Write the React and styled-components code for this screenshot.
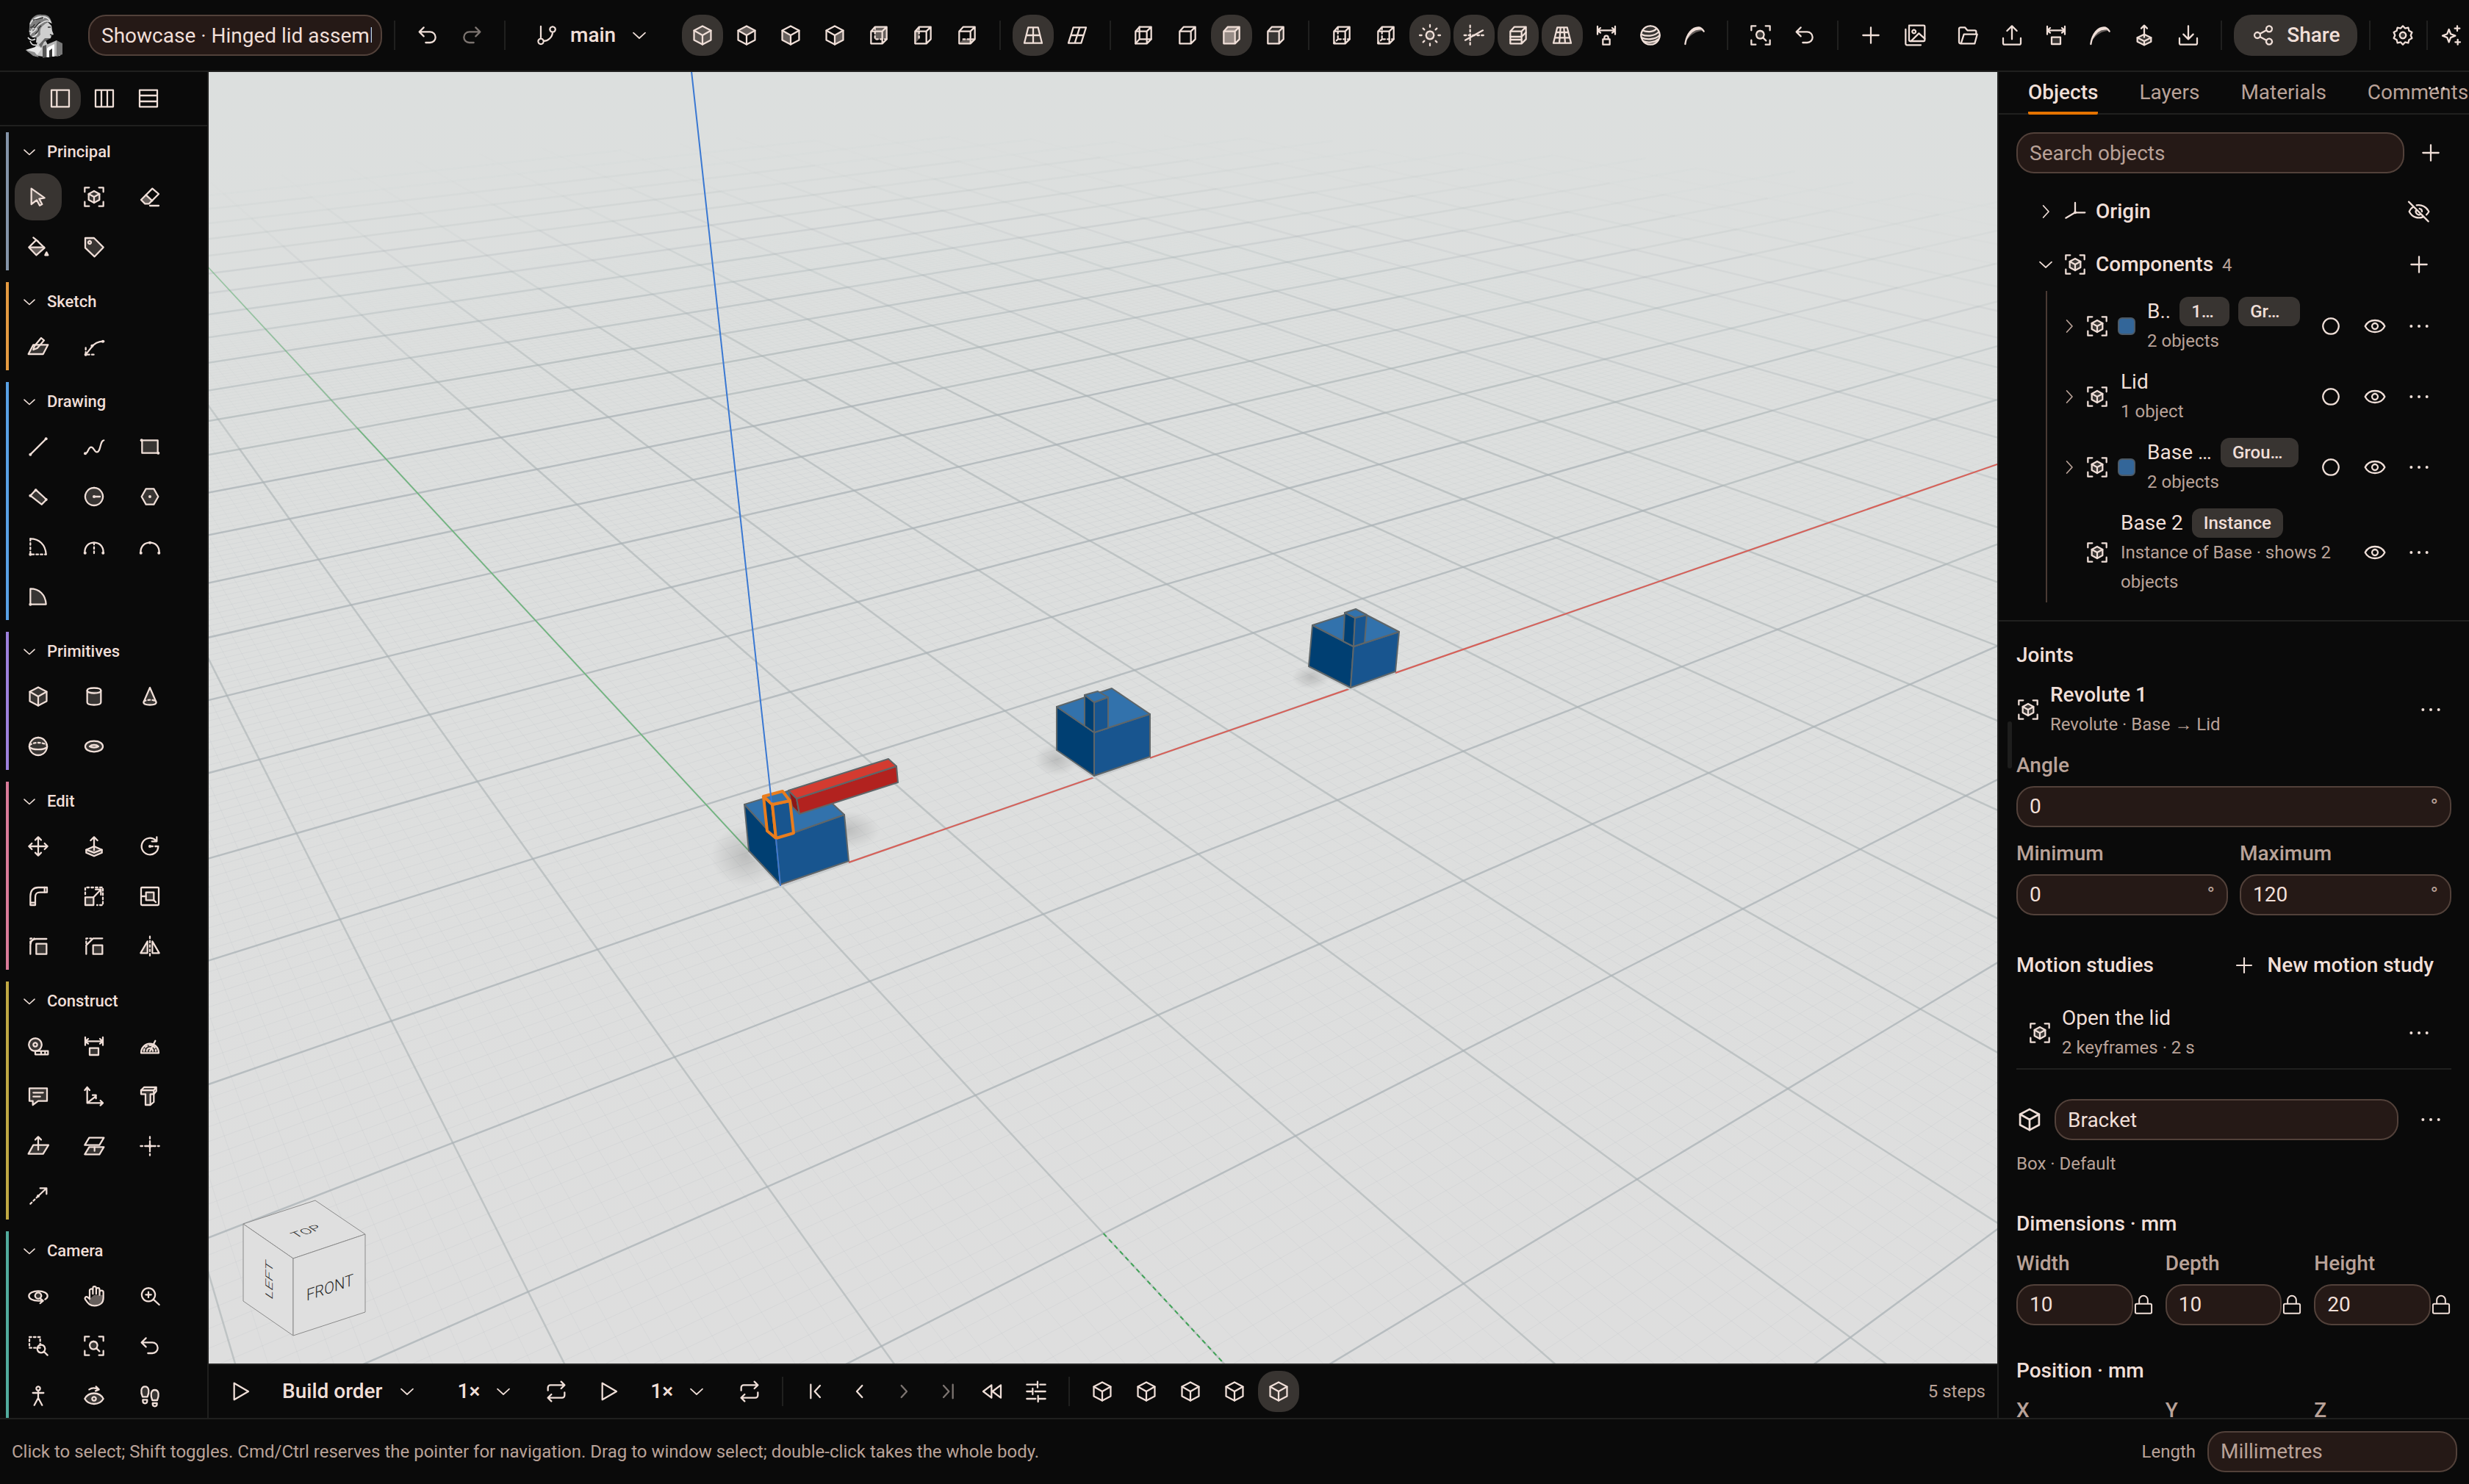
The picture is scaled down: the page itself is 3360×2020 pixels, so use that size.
import React from 'react';
import styled, { createGlobalStyle, css } from 'styled-components';

const colors = {
  bg: '#0a0a0a',
  line: '#20201f',
  text: '#f0dfd8',
  muted: '#b9a298',
  field: '#251916',
  fieldLine: '#52413a',
  active: '#383431',
  accent: '#e57300',
};

const GlobalStyle = createGlobalStyle`
  * { box-sizing: border-box; }
  body {
    margin: 0;
    background: ${colors.bg};
    color: ${colors.text};
    font-family: Roboto, "Liberation Sans", sans-serif;
    font-size: 28px;
    line-height: 40px;
  }
  button, input, select { font: inherit; color: inherit; }
`;

/* ---------- icons ---------- */

// s: stroke, t: stroke with tint, h: tint only, d: dashed stroke, o: dot
const CUBE = 'M12 2.6 20.6 7.2v9.6L12 21.4 3.4 16.8V7.2z';
const CUBE_IN = 'M3.4 7.2 12 12l8.6-4.8M12 12v9.4';
const BOX_OUT = 'M4 8h11.5v12.5H4zM4 8l4-4.5h12V16l-4.500 4.500M15.500 8 20 3.500';
const CORNERS = 'M2.500 7V2.500H7M17 2.500h4.500V7M21.500 17v4.500H17M7 21.500H2.500V17';
const DIMENSION = 'M3 3v8M21 3v8M3 7h18M6 4.500 3 7l3 2.500M18 4.500 21 7l-3 2.500';

const icons = {
  undo: [['s', 'M8 4 3.500 8.500 8 13M3.500 8.500h11a5.500 5.500 0 0 1 0 11H10']],
  redo: [['s', 'm16 4 4.500 4.500L16 13M20.500 8.500h-11a5.500 5.500 0 0 0 0 11H14']],
  branch: [['s', 'M6 3v12M6 15.500a2.800 2.800 0 1 0 .1 0M18 3.200a2.800 2.800 0 1 0 .1 0M18 8.800C18 14 13 18 8.800 18']],
  down: [['s', 'm6 9.500 6 5.500 6-5.500']],
  right: [['s', 'm9.500 6 5.500 6-5.500 6']],
  left: [['s', 'm14.500 6-5.500 6 5.500 6']],
  cube: [['s', CUBE], ['s', CUBE_IN]],
  cubeTint: [['t', CUBE], ['s', CUBE_IN]],
  cubeTop: [['s', CUBE], ['s', CUBE_IN], ['h', 'M12 2.600 20.600 7.200 12 12 3.400 7.200z']],
  cubeLeft: [['s', CUBE], ['s', CUBE_IN], ['h', 'M3.400 7.200 12 12v9.400l-8.600-4.600z']],
  cubeRight: [['s', CUBE], ['s', CUBE_IN], ['h', 'M20.600 7.200 12 12v9.400l8.600-4.600z']],
  boxBack: [['s', BOX_OUT], ['h', 'M8 3.500h12V16H8z'], ['d', 'M8 4v12h12']],
  boxSide: [['s', BOX_OUT], ['h', 'M4 8l4-4.500V16l-4 4.500z'], ['d', 'M8 4v12']],
  boxBottom: [['s', BOX_OUT], ['h', 'm4 20.500 4-4.500h12l-4.500 4.500z'], ['d', 'M8 16h12']],
  perspective: [['s', 'M7 4h10l4 16H3zM5 12h14M12 4v16']],
  ortho: [['s', 'M8 4h13l-5 16H3zM5.500 12h13M14.500 4l-5 16']],
  wire: [['s', BOX_OUT], ['s', 'M8 3.500V16h12M8 16l-4 4.500']],
  boxHidden: [['s', BOX_OUT]],
  boxShaded: [['t', BOX_OUT], ['h', 'M4 8h11.500v12.500H4z'], ['h', 'M4 8l4-4.500h12L15.500 8z']],
  boxMono: [['t', BOX_OUT]],
  boxDash: [['s', BOX_OUT], ['d', 'M8 4v12h12M8 16l-4 4']],
  sun: [['t', 'M12 8a4 4 0 1 0 .01 0'], ['s', 'M12 1.500v2M12 20.500v2M1.500 12h2M20.500 12h2M5 5l1.300 1.300M17.700 17.700 19 19M5 19l1.300-1.300M17.700 6.300 19 5']],
  axes: [['d', 'M8 2v20M2 12h20'], ['s', 'M3 17 21 7']],
  section: [['s', BOX_OUT], ['s', 'M4 13.500h11.500l4.500-4.500M4 16.500h11.500']],
  gridPlane: [['s', 'M7 4h10l4 16H3zM5.800 9h12.400M4.500 14.500h15M10.300 4 9 20M13.700 4 15 20']],
  dimLock: [['s', DIMENSION], ['s', 'M8.500 16h7v5.500h-7zM10 16v-1.500a2 2 0 0 1 4 0V16']],
  dimBox: [['s', DIMENSION], ['t', 'M7.500 14h9v7h-9z']],
  zebra: [['t', 'M12 2.500a9.500 9.500 0 1 0 .01 0'], ['s', 'M4 7c4 2 11 2 14-1.500M2.800 11c5 2.500 13 2 17.200-2M3 14.500c5 2.500 13.500 2 18-2M5 18c4 2 11 1.500 15-2']],
  comb: [['h', 'M2.500 20.500C4 10 10 4 17 4l4.500 3.500C15 7 8 11 4 17.500z'], ['s', 'M2.500 21C4 10 10 4 16 4c2.500 0 4 1.500 5.500 4M3.500 16C7 9 12 5 18 5.500']],
  zoomFit: [['s', CORNERS], ['t', 'M11.500 7.500a4 4 0 1 0 .01 0'], ['s', 'm14.500 14.500 3 3']],
  plus: [['s', 'M12 4v16M4 12h16']],
  images: [['s', 'M6 2h15a1 1 0 0 1 1 1v14a1 1 0 0 1-1 1H7a1 1 0 0 1-1-1V3M2.500 6v14.500a1.500 1.500 0 0 0 1.500 1.500h14'], ['s', 'M11 6.500a1.800 1.800 0 1 0 .01 0M8 18l8-8 6 5.500']],
  folder: [['s', 'M3 19V5.500a1.500 1.500 0 0 1 1.500-1.500H9l2.500 3H19a1.500 1.500 0 0 1 1.500 1.500V11M4.500 20.500h14.500l2.500-9.500H8L5 20.500a2 2 0 0 1-2-2']],
  upload: [['s', 'M12 16V2.500M7 7.500l5-5 5 5M3 15v5a1.500 1.500 0 0 0 1.500 1.500h15A1.500 1.500 0 0 0 21 20v-5']],
  download: [['s', 'M12 2.500V16M7 11l5 5 5-5M3 15v5a1.500 1.500 0 0 0 1.500 1.500h15A1.500 1.500 0 0 0 21 20v-5']],
  cubeUp: [['t', 'm12 11 7 3.500v4L12 22l-7-3.500v-4z'], ['s', 'm5 14.500 7 3.500 7-3.500M12 18v4M12 14V2M9 5l3-3 3 3']],
  share: [['s', 'M18 2.500a3 3 0 1 0 .01 0M6 9a3 3 0 1 0 .01 0M18 15.500a3 3 0 1 0 .01 0M8.600 10.500l6.800-3.700M8.600 13.500l6.800 3.700']],
  gear: [['s', 'M12 2.500 14.200 4.900 17.500 4.200 18.300 7.400 21.300 9 20 12l1.300 3-3 1.600-.8 3.200-3.300-.7L12 21.500l-2.200-2.400-3.300.7-.8-3.200-3-1.600L4 12 2.700 9l3-1.600.8-3.200 3.300.7z'], ['t', 'M12 8.800a3.200 3.200 0 1 0 .01 0']],
  sparkle: [['s', 'm9.500 6 1.800 4.700L16 12.500l-4.700 1.800L9.500 19l-1.800-4.700L3 12.500l4.700-1.800zM18 2.500v5M15.500 5h5M18.500 16.500v5M16 19h5']],
  colsLeft: [['s', 'M3 3.500h18v17H3zM8.500 3.500v17']],
  cols: [['s', 'M3 3.500h18v17H3zM9 3.500v17M15 3.500v17']],
  rows: [['s', 'M3 3.500h18v17H3zM3 9h18M3 15h18']],
  pointer: [['t', 'M5 3.500 18.500 13l-5.500 1 3 5.500-2.500 1.300-3-5.500L5 19.500z']],
  scanCube: [['s', CORNERS], ['t', 'm12 6 5.500 3v6L12 18l-5.500-3V9z'], ['s', 'm6.500 9 5.500 3 5.500-3M12 12v6']],
  eraser: [['s', 'm3 15 11.500-11.500 6.500 5.500-10 10H7z'], ['h', 'm3 15 5-5 6.500 6-3.500 3H7z'], ['s', 'm8 10 6.500 6M12 21h9']],
  bucket: [['s', 'm10 5 8.500 8L10 20.500 2.500 12.500zM7 2.500l5 4'], ['h', 'M2.500 12.500h16l-8.500 8z'], ['s', 'M3 12.500h15M20.500 17.500l1.500 3h-3z']],
  tag: [['t', 'M3 3h9l9.500 9.500L12.500 22 3 13z'], ['s', 'M7.500 6a1.500 1.500 0 1 0 .01 0']],
  sketch: [['t', 'M7 10h15l-5 9.500H2z'], ['s', 'm7 15 1-3.500L15 3l3 2.500-7 8z']],
  sketchArc: [['s', 'M3.500 20 9 13c3-4.500 7-6.500 13-6.500'], ['d', 'M3.500 13v7H13'], ['o', 3.500, 20], ['o', 10, 11], ['o', 21, 6.500]],
  line: [['s', 'M4 20 20 4'], ['o', 4, 20], ['o', 20, 4]],
  spline: [['s', 'M3 19c3 0 3-6.500 6-6.500s3 5 6 5c4 0 3-12 7-12'], ['o', 3, 19]],
  rect: [['t', 'M4 5.500h16v13H4z'], ['o', 3.500, 5.500], ['o', 20.500, 18.500]],
  rectRot: [['t', 'M4 11 9.500 5l11 10-5 5z'], ['o', 4, 11], ['o', 9.500, 5.500], ['o', 20, 15]],
  circle: [['t', 'M12 3a9 9 0 1 0 .01 0'], ['s', 'M12 12h6'], ['o', 12, 12]],
  polygon: [['t', 'M8 4h8l4.500 8-4.500 8H8l-4.500-8z'], ['o', 12, 12]],
  arcCenter: [['s', 'M4 4c9 0 15.500 6 16 16'], ['d', 'M4 4v16h16'], ['o', 4, 20]],
  arc3: [['s', 'M2.500 18c0-6.500 4-10 9.500-10s9.500 3.500 9.500 10'], ['d', 'M12 8v11'], ['o', 2.800, 18.500], ['o', 21.200, 18.500]],
  arcTan: [['s', 'M2.500 18c0-6.500 4-10 9.500-10s9.500 3.500 9.500 10'], ['o', 12, 8], ['o', 2.800, 18.500], ['o', 21.200, 18.500]],
  pie: [['t', 'M4 4c9 0 15.500 6 16 16H4z'], ['o', 4, 20]],
  cylinder: [['t', 'M5 6v12c0 3.500 14 3.500 14 0V6'], ['s', 'M5 6c0-3.500 14-3.500 14 0S5 9.500 5 6']],
  cone: [['t', 'M12 3 5.500 18c0 3.500 13 3.500 13 0z'], ['d', 'M6 17c3-2 9-2 12 0']],
  sphere: [['t', 'M12 3a9 9 0 1 0 .01 0'], ['s', 'M3 12.500c3 3.500 15 3.500 18 0'], ['d', 'M3.500 10.500c4-3 13-3 17 0']],
  torus: [['t', 'M12 6.500c12 0 12 11 0 11s-12-11 0-11'], ['s', 'M7.500 12c2-2 7-2 9 0-2 1.500-7 1.500-9 0']],
  move: [['s', 'M12 2.500v19M2.500 12h19M9 5.500l3-3 3 3M9 18.500l3 3 3-3M5.500 9l-3 3 3 3M18.500 9l3 3-3 3']],
  pushPull: [['t', 'm12 12 8 3.500v3L12 22l-8-3.500v-3z'], ['s', 'm4 15.500 8 3 8-3M12 16V2.500M8.500 6 12 2.500 15.500 6']],
  rotate: [['s', 'M20.500 12A8.500 8.500 0 1 1 18 6M19 2.500V7h-5'], ['d', 'M13 12h8'], ['o', 12, 12]],
  pipe: [['s', 'M4 21v-9c0-6 3-9 8-9h9v5h-7c-3.500 0-5 1-5 5v8z'], ['s', 'M4.500 18.500h4M18.500 3v5']],
  scale: [['t', 'M3 13h8.500v8H3z'], ['d', 'M3 10V3h18v18h-6'], ['s', 'M11.500 13 19 5M13.500 5H19v5.500']],
  offset: [['s', 'M4 3h16a1 1 0 0 1 1 1v16a1 1 0 0 1-1 1H4a1 1 0 0 1-1-1V4a1 1 0 0 1 1-1M3 12h5M16 16l2 2'], ['t', 'M8 8h8v8H8z']],
  fillet: [['t', 'M10 9.500h10.500V20H10z'], ['s', 'M4 20v-9c0-4 2-6.500 6-6.500h10.500'], ['d', 'M4 9V4h4']],
  chamfer: [['t', 'M11 11h9.500v9H11z'], ['s', 'M4 20v-9l7-7h9.500'], ['d', 'M4 9V4h5']],
  mirror: [['t', 'M9.500 7v12h-7z'], ['s', 'M14.500 7v12h7z'], ['d', 'M12 2v20']],
  tape: [['t', 'M9 4a6.500 6.500 0 1 0 .01 0'], ['s', 'M9 8.500a2 2 0 1 0 .01 0M9 17h13v3.500H9zM15 17v3M19 17v3']],
  protractor: [['t', 'M3 19a9 9.500 0 0 1 18 0z'], ['s', 'M12 17 17.500 6.500M9 17a3 3 0 0 1 6 0'], ['d', 'M6 17a6 6 0 0 1 12 0']],
  note: [['t', 'M3 4h18v13h-9l-5.500 4v-4H3z'], ['s', 'M7 8.500h10M7 12.500h7']],
  ucs: [['s', 'M5 3v16h16M2.500 6 5 3l2.500 3M18.500 16.500 21 19l-2.500 2.500M5 19l9-7M10.500 11H14v3.500']],
  text3d: [['t', 'M3 6h13v4h-3.500v11H7.500V10H3z'], ['s', 'M3 6 6 3h12.500L16 6M18.500 3v4L16 10M12.500 21l3.500-3v-8']],
  planeUp: [['t', 'M7 11h15.500l-5.500 9H2z'], ['s', 'M12 16V2.500M9 5.500l3-3 3 3']],
  planes: [['s', 'M7 3.500h15L17.500 11H2.500z'], ['t', 'M7 13h15l-4.500 7.500h-15z'], ['s', 'M12.500 13v4']],
  cross: [['s', 'M12 9v6M9 12h6'], ['d', 'M12 2.500v19M2.500 12h19'], ['o', 12, 12]],
  axisLine: [['d', 'M4 20 12 12'], ['s', 'M12 12 20 4.500M14 4h6.500v6'], ['o', 12, 12]],
  orbit: [['s', 'M19 15.500c2-1 2.500-2.500 2.500-3.500 0-3-4-5-9.500-5S2.500 9 2.500 12s4 5 9.500 5h4M14 14.500l3 2.500-3 2.500'], ['t', 'M12 8.500a3.200 3.200 0 1 0 .01 0']],
  hand: [['h', 'M6.500 16 12 11h9v5c0 4-4 6-8 6s-6-2.500-6.500-6z'], ['s', 'M7.500 12V6a1.700 1.700 0 0 1 3.300 0V4a1.700 1.700 0 0 1 3.400 0v1.500a1.700 1.700 0 0 1 3.400 0v3a1.700 1.700 0 0 1 3.900 0V14c0 5-3.500 8-9 8-4.500 0-6.500-2-9.500-6.500-1-1.500.5-3 2-2.500L7.500 15V6M10.800 5v5M14.200 5v5M17.600 7v4']],
  zoomIn: [['s', 'M10.500 4a6.800 6.800 0 1 0 .01 0M15.500 15.500 21.500 21M10.500 8v5.500M7.800 10.700h5.500']],
  zoomWin: [['d', 'M3 3h11v11H3z'], ['s', 'M15 11a4 4 0 1 0 .01 0M18 18l3.500 3.500']],
  person: [['s', 'M12 2.500a2 2 0 1 0 .01 0M12 7v7M6.500 9h11M12 14l-4 7.500M12 14l4 7.500']],
  lookAround: [['t', 'M2.500 15c4-7.500 15-7.500 19 0-4 7-15 7-19 0z'], ['s', 'M12 13a2 2 0 1 0 .01 0M7 5.500c3-2 6-2 9.500 0M14 2.500l3 3-3.500 1.500']],
  steps: [['t', 'M7 2.500c4.500 0 4.500 6 2.500 10.500h-5C2.500 8.500 2.500 2.500 7 2.500zM17 6c4.500 0 4.500 6 2.500 10.500h-5C12.500 12 12.500 6 17 6z'], ['s', 'M4.800 16h4.400v1.500a2 2 0 0 1-4.400 0zM14.800 19.500h4.400v1a2 2 0 0 1-4.400 0z']],
  origin: [['s', 'M12 3v10h10M12 13 2.500 18.500'], ['o', 12, 13]],
  eye: [['s', 'M2 12c4-8 16-8 20 0-4 8-16 8-20 0zM12 9a3 3 0 1 0 .01 0']],
  eyeOff: [['s', 'M6.500 7C4.500 8 3 10 2 12c3 6 9 7.500 14 5.500M9.500 5.500c5-1 10 1.500 12.500 6.500-.7 1.300-1.500 2.500-2.500 3.300M9.500 10a3.200 3.200 0 0 0 4.500 4.500M1.500 2l20 20M12.500 9a3 3 0 0 1 2.500 3']],
  ring: [['s', 'M12 4a8 8 0 1 0 .01 0']],
  dots: [['o', 4, 12], ['o', 12, 12], ['o', 20, 12]],
  lock: [['s', 'M4 11h16a1.500 1.500 0 0 1 1.500 1.500v8A1.500 1.500 0 0 1 20 22H4a1.500 1.500 0 0 1-1.500-1.500v-8A1.500 1.500 0 0 1 4 11zM7 11V6.500a5 5 0 0 1 10 0V11']],
  play: [['s', 'M5 3.500v17L19.500 12z']],
  repeat: [['s', 'm17 2 3.500 3.500L17 9M3.500 11V8A2.500 2.500 0 0 1 6 5.500h14M7 22l-3.500-3.500L7 15M20.500 13v3a2.500 2.500 0 0 1-2.500 2.500H4']],
  first: [['s', 'M7 5v14M16.500 6 11 12l5.500 6']],
  last: [['s', 'M17 5v14M7.500 6 13 12l-5.500 6']],
  rewind: [['s', 'M11.500 5.500 3 12l8.500 6.500zM21 5.500 12.500 12l8.500 6.500z']],
  sliders: [['s', 'M2.500 5H12M16 5h5.500M13.500 2v6M2.500 12H7M11 12h10.500M8.500 9v6M2.500 19.500h9M15 19.500h6.500M14 16.500v6']],
};

function Icon({ name, size = 32, weight = 1.7 }) {
  return (
    <svg
      width={size}
      height={size}
      viewBox="0 0 24 24"
      fill="none"
      stroke="currentColor"
      strokeWidth={weight}
      strokeLinecap="round"
      strokeLinejoin="round"
      aria-hidden="true"
    >
      {icons[name].map(([kind, a, b], i) => {
        if (kind === 'o') return <circle key={i} cx={a} cy={b} r="1.500" fill="currentColor" stroke="none" />;
        if (kind === 'h') return <path key={i} d={a} fill="currentColor" fillOpacity=".4" stroke="none" />;
        if (kind === 't') return <path key={i} d={a} fill="currentColor" fillOpacity=".2" />;
        if (kind === 'd') return <path key={i} d={a} strokeDasharray="2 2.400" />;
        return <path key={i} d={a} />;
      })}
    </svg>
  );
}

/* ---------- shared parts ---------- */

const Button = styled.button`
  display: flex;
  align-items: center;
  justify-content: center;
  gap: ${(props) => props.$gap || 16}px;
  flex: none;
  height: ${(props) => (props.$tool ? '64px' : '56px')};
  min-width: ${(props) => (props.$tool ? '64px' : '56px')};
  padding: ${(props) => (props.$wide ? '0 24px' : '0')};
  border: 0;
  border-radius: 24px;
  background: ${(props) => (props.$active ? colors.active : 'transparent')};
  opacity: ${(props) => (props.$dim ? 0.5 : 1)};
  font-weight: 500;
  white-space: nowrap;
  svg { flex: none; }
`;

const fieldStyle = css`
  height: 56px;
  min-width: 0;
  border: 2px solid ${colors.fieldLine};
  border-radius: 24px;
  background: ${colors.field};
  outline: none;
`;

const TextInput = styled.input`
  ${fieldStyle}
  flex: 1;
  padding: 0 16px;
  &::placeholder { color: ${colors.muted}; opacity: 1; }
`;

const Group = styled.div`
  display: flex;
  align-items: center;
  gap: 4px;
  flex: none;
`;

const Divider = styled.span`
  flex: none;
  width: 2px;
  height: 40px;
  background: ${colors.line};
`;

function IconButton({ icon, label, ...rest }) {
  return (
    <Button type="button" aria-label={label || icon} {...rest}>
      <Icon name={icon} />
    </Button>
  );
}

/* ---------- header ---------- */

const Header = styled.header`
  display: flex;
  align-items: center;
  gap: 16px;
  height: 98px;
  padding-left: 32px;
  border-bottom: 2px solid ${colors.line};
  overflow: hidden;
`;

const Logo = styled.a`
  display: block;
  flex: none;
  width: 56px;
  height: 64px;
  margin-right: 16px;
  svg { display: block; }
`;

const Title = styled(TextInput)`
  flex: none;
  width: 400px;
  padding-right: 12px;
`;

const Branch = styled(Button)`
  margin-right: 2px;
`;

const headerGroups = [
  ['cubeTint*', 'cubeTop', 'cubeLeft', 'cubeRight', 'boxBack', 'boxSide', 'boxBottom'],
  ['perspective*', 'ortho'],
  ['wire', 'boxHidden', 'boxShaded*', 'boxMono'],
  ['boxDash', 'boxDash', 'sun*', 'axes*', 'section*', 'gridPlane*', 'dimLock', 'zebra', 'comb'],
  ['zoomFit', 'undo'],
];

function Bust() {
  return (
    <svg width="56" height="64" viewBox="0 0 56 64">
      <path d="M5 54 14 51 20 40l10-1 4 8-2 15-12-2z" fill="#c4c4c4" />
      <path d="m3 52 14 9 8-11-6-3z" fill="#e6e6e6" />
      <path d="m3 52 12 3 6 7-8-2z" fill="#8c8c8c" />
      <path d="M19 22 33 14l5 5 1 7 2 5-3 1-1 4-7 1-3 6-10-1z" fill="#cfcfcf" />
      <path d="M29 36 37 36l-9 5-4 8-3-4z" fill="#666" />
      <path d="M8 21C7 10 16 2 25 4c9-1 13 5 13 12-4-3-8-2-10 2-4 2-6 6-5 13-3 4-5 5-9 4-6 0-7-6-6-14z" fill="#7f7f7f" />
      <path d="M9 17c3-8 11-11 16-10 7-1 10 3 12 7-7-4-11 1-15 3s-6 7-10 6M8 26c4 4 7 1 10-4M12 34c5 0 8-4 7-10M9 31c2-1 3-4 2-7M6 35c2 3 6 5 10 2M9 40c2 5 5 6 8 5M15 12c3-3 8-5 13-3" fill="none" stroke="#e4e4e4" strokeWidth="1.600" />
      <path d="M13 11c5 1 8-3 14-3M14 22c4 0 4-6 9-8M16 30c5-2 3-8 8-11M9 21c3 1 5-2 6-4" fill="none" stroke="#2a2a2a" strokeWidth="1.300" />
      <path d="M33 21h4M36 31l3 1" stroke="#333" strokeWidth="1.500" />
      <path d="m26 47 19-8 5 5v16l-24 2z" fill="#b5b5b5" />
      <path d="m26 47 5-2v17l-5 1z" fill="#555" />
      <path d="m34 48 8-4v17h-3V50l-4 3v9h-3V50z" fill="#fff" />
      <path d="m45 39 8 4v15l-8 3z" fill="#777" />
      <path d="m35 53 4-3v11l-4 1z" fill="#333" />
    </svg>
  );
}

function HeaderGroup({ items }) {
  return (
    <Group>
      {items.map((item, i) => {
        const name = item.replace('*', '');
        return <IconButton key={i} icon={name} $active={item !== name} />;
      })}
    </Group>
  );
}

function TopBar() {
  return (
    <Header>
      <Logo href="#home" aria-label="Home"><Bust /></Logo>
      <Title aria-label="Document title" defaultValue="Showcase · Hinged lid assembly" />
      <Divider />
      <Group>
        <IconButton icon="undo" />
        <IconButton icon="redo" $dim />
      </Group>
      <Divider />
      <Branch type="button" $wide>
        <Icon name="branch" />
        main
        <Icon name="down" weight={1.3} />
      </Branch>
      {headerGroups.map((items, i) => (
        <React.Fragment key={i}>
          {i > 0 && <Divider />}
          <HeaderGroup items={items} />
        </React.Fragment>
      ))}
      <Divider />
      <HeaderGroup items={['plus', 'images']} />
      <HeaderGroup items={['folder', 'upload', 'dimBox', 'comb', 'cubeUp', 'download']} />
      <Divider />
      <Button type="button" $wide $active>
        <Icon name="share" />
        Share
      </Button>
      <Divider />
      <Group>
        <IconButton icon="gear" />
        <Divider />
        <IconButton icon="sparkle" />
      </Group>
    </Header>
  );
}

/* ---------- left tools ---------- */

const Main = styled.main`
  display: grid;
  grid-template-columns: 284px minmax(0, 1fr) 642px;
  min-height: 0;
`;

const ToolPanel = styled.aside`
  display: flex;
  flex-direction: column;
  min-height: 0;
  overflow: hidden;
  border-right: 2px solid ${colors.line};
`;

const LayoutTabs = styled.div`
  display: flex;
  flex: none;
  align-items: center;
  justify-content: center;
  gap: 4px;
  height: 74px;
  padding-left: 2px;
  border-bottom: 2px solid ${colors.line};
`;

const ToolList = styled.div`
  display: flex;
  flex-direction: column;
  gap: 16px;
  padding: 8px;
`;

const ToolSection = styled.section`
  border-left: 4px solid ${(props) => props.$color};
  padding-left: 8px;
`;

const SectionToggle = styled.button`
  display: flex;
  align-items: center;
  gap: 10px;
  width: 100%;
  height: 56px;
  padding: 0 6px 2px;
  border: 0;
  background: transparent;
  font-size: 22px;
  font-weight: 500;
`;

const ToolGrid = styled.div`
  display: grid;
  grid-template-columns: repeat(3, 64px);
  gap: 4px 12px;
`;

const toolSections = [
  { title: 'Principal', color: '#8494a8', tools: ['pointer', 'scanCube', 'eraser', 'bucket', 'tag'] },
  { title: 'Sketch', color: '#e59a40', tools: ['sketch', 'sketchArc'] },
  {
    title: 'Drawing',
    color: '#58a0e4',
    tools: ['line', 'spline', 'rect', 'rectRot', 'circle', 'polygon', 'arcCenter', 'arc3', 'arcTan', 'pie'],
  },
  { title: 'Primitives', color: '#9d80dc', tools: ['cubeTint', 'cylinder', 'cone', 'sphere', 'torus'] },
  {
    title: 'Edit',
    color: '#d97a98',
    tools: ['move', 'pushPull', 'rotate', 'pipe', 'scale', 'offset', 'fillet', 'chamfer', 'mirror'],
  },
  {
    title: 'Construct',
    color: '#c0a843',
    tools: ['tape', 'dimBox', 'protractor', 'note', 'ucs', 'text3d', 'planeUp', 'planes', 'cross', 'axisLine'],
  },
  {
    title: 'Camera',
    color: '#52ab9d',
    tools: ['orbit', 'hand', 'zoomIn', 'zoomWin', 'zoomFit', 'undo', 'person', 'lookAround', 'steps'],
  },
];

function Tools() {
  return (
    <ToolPanel>
      <LayoutTabs>
        <IconButton icon="colsLeft" $active />
        <IconButton icon="cols" />
        <IconButton icon="rows" />
      </LayoutTabs>
      <ToolList>
        {toolSections.map(({ title, color, tools }) => (
          <ToolSection key={title} $color={color}>
            <SectionToggle type="button">
              <Icon name="down" size={28} weight={1.4} />
              {title}
            </SectionToggle>
            <ToolGrid>
              {tools.map((tool) => (
                <IconButton key={tool} icon={tool} $tool $active={tool === 'pointer'} />
              ))}
            </ToolGrid>
          </ToolSection>
        ))}
      </ToolList>
    </ToolPanel>
  );
}

/* ---------- 3d view ---------- */

const Center = styled.div`
  display: grid;
  grid-template-rows: minmax(0, 1fr) 74px;
  min-height: 0;
`;

const Canvas = styled.svg`
  display: block;
  width: 100%;
  height: 100%;
  background: linear-gradient(#dcdfde, #dedede);
`;

// ground plane to screen
const depth = (x, y) => 1 + 0.0547 * x + 0.0808 * y;
const project = (x, y) => {
  const w = depth(x, y);
  return `${((1063.3 + 294.5 * x - 24.8 * y) / w).toFixed(1)} ${((1205.7 - 16 * x - 22.1 * y) / w).toFixed(1)}`;
};

function gridPaths(step, reach, skipMajor) {
  const buckets = {};
  const add = (x1, y1, x2, y2, axis) => {
    if (depth(x1, y1) < 0.5 || depth(x2, y2) < 0.5) return;
    const fade = Math.min(1, (reach - Math.hypot(x1, y1)) / (reach * 0.7));
    if (fade <= 0) return;
    const key = `${axis}${Math.ceil(fade * 8)}`;
    buckets[key] = `${buckets[key] || ''}M${project(x1, y1)}L${project(x2, y2)}`;
  };
  const per = Math.round(1 / step);
  for (let i = -7 * per; i <= 23 * per; i += 1) {
    if (skipMajor && i % per === 0) continue;
    for (let j = -7; j < 23; j += 1) {
      add(i * step, j, i * step, j + 1, 'x');
      add(j, i * step, j + 1, i * step, 'y');
    }
  }
  return Object.entries(buckets).map(([key, d]) => ({ key, d, axis: key[0], fade: Number(key.slice(1)) / 8 }));
}

const majorGrid = gridPaths(1, 22, false);
const minorGrid = gridPaths(0.1, 15, true);

const Face = styled.polygon`
  fill: ${(props) => props.$fill};
  stroke: ${(props) => props.$stroke || '#5f6669'};
  stroke-width: ${(props) => (props.$stroke ? 4 : 2)};
  stroke-linejoin: round;
`;

const CubeFace = styled.polygon`
  fill: #dfdfdf;
  stroke: #8b8b8b;
  stroke-width: 1;
`;

const CubeLabel = styled.text`
  fill: #2a2a2a;
  font-family: Roboto, sans-serif;
  font-size: 22px;
  font-weight: 300;
  text-anchor: middle;
`;

const BLUE_TOP = '#3272ac';
const BLUE_LEFT = '#003f72';
const BLUE_RIGHT = '#18558f';

const blocks = [
  {
    left: '1786,851 1842,880 1838,936 1781,907',
    right: '1842,880 1904,860 1899,914 1838,936',
    top: '1786,851 1848,831 1904,860 1842,880',
    post: {
      left: '1830,834 1844,841 1842,880 1828,873',
      right: '1844,841 1860,837 1857,875 1842,880',
      top: '1830,834 1845,829 1860,837 1844,841',
    },
  },
  {
    left: '1438,962 1489,997 1489,1056 1438,1021',
    right: '1489,997 1565,972 1565,1030 1489,1056',
    top: '1438,962 1513,937 1565,972 1489,997',
    post: {
      left: '1476,946 1489,956 1489,997 1476,988',
      right: '1489,956 1508,949 1508,991 1489,997',
      top: '1476,946 1494,941 1508,949 1489,956',
    },
  },
  {
    left: '1013,1095 1056,1142 1062,1204 1019,1158',
    right: '1056,1142 1149,1109 1155,1172 1062,1204',
    top: '1013,1095 1104,1067 1149,1109 1056,1142',
  },
];

function Block({ shape }) {
  return (
    <g>
      <Face $fill={BLUE_LEFT} points={shape.left} />
      <Face $fill={BLUE_RIGHT} points={shape.right} />
      <Face $fill={BLUE_TOP} points={shape.top} />
      {shape.post && <Block shape={shape.post} />}
    </g>
  );
}

function Scene() {
  return (
    <Canvas viewBox="284 98 2434 1758" preserveAspectRatio="xMidYMid slice" role="img" aria-label="Hinged lid assembly">
      <defs>
        <radialGradient id="shade">
          <stop offset="0" stopColor="#000" stopOpacity=".15" />
          <stop offset="1" stopColor="#000" stopOpacity="0" />
        </radialGradient>
      </defs>
      {minorGrid.map(({ key, d, fade }) => (
        <path key={key} d={d} fill="none" stroke="#9aa7ac" strokeWidth="1" opacity={0.11 * fade} />
      ))}
      {majorGrid.map(({ key, d, axis, fade }) => (
        <path
          key={key}
          d={d}
          fill="none"
          stroke={axis === 'y' ? '#a9b2b5' : '#b0b8b9'}
          strokeWidth="2.500"
          opacity={(axis === 'y' ? 0.75 : 0.7) * fade ** (axis === 'y' ? 1.5 : 2)}
        />
      ))}
      <path d={`M${project(0, 0)}L${project(0, 9)}`} stroke="#5cb56d" strokeWidth="1.500" opacity=".85" />
      <path d={`M${project(0, 9)}L${project(0, 18)}`} stroke="#5cb56d" strokeWidth="1.500" opacity=".55" />
      <path d={`M${project(0, -3)}L${project(0, -4)}`} stroke="#3fa556" strokeWidth="2" strokeDasharray="6 5" />
      <path d={`M${project(0, 0)}L${project(12, 0)}`} stroke="#df4f45" strokeWidth="2" opacity=".85" />
      <ellipse cx="1015" cy="1165" rx="48" ry="42" fill="url(#shade)" />
      <ellipse cx="1152" cy="1130" rx="46" ry="26" fill="url(#shade)" />
      <ellipse cx="1438" cy="1034" rx="30" ry="22" fill="url(#shade)" />
      <ellipse cx="1784" cy="922" rx="26" ry="16" fill="url(#shade)" />
      <path d="m1019 1160 43 47 93-33M1438 1023l51 35 76-26M1781 909l57 29 61-22" fill="none" stroke="#c9cdcf" strokeWidth="3" />
      {blocks.map((shape) => <Block key={shape.top} shape={shape} />)}
      <Face $fill="#8f1616" points="1073,1076 1084,1087 1088,1108 1078,1098" />
      <Face $fill="#b2221f" points="1084,1087 1220,1043 1222,1065 1088,1108" />
      <Face $fill="#d33b30" points="1073,1076 1209,1033 1220,1043 1084,1087" />
      <Face $fill={BLUE_LEFT} $stroke="#ea7d1d" points="1039,1084 1051,1095 1056,1141 1044,1131" />
      <Face $fill={BLUE_RIGHT} $stroke="#ea7d1d" points="1051,1095 1075,1090 1080,1134 1056,1141" />
      <Face $fill={BLUE_TOP} $stroke="#ea7d1d" points="1039,1084 1065,1077 1075,1090 1051,1095" />
      <path d="m941 97 109 995M1056 1142l6 64" stroke="#3a78d2" strokeWidth="2" />
      <CubeFace points="331,1666 429,1634 497,1680 399,1713" />
      <CubeFace points="331,1666 399,1713 399,1818 331,1771" />
      <CubeFace points="399,1713 497,1680 497,1786 399,1818" />
      <CubeLabel transform="matrix(.88 -.3 .58 .4 421 1679)">TOP</CubeLabel>
      <CubeLabel transform="matrix(0 -1 .62 .42 371 1745)">LEFT</CubeLabel>
      <CubeLabel transform="matrix(.92 -.31 0 1 449 1760)">FRONT</CubeLabel>
    </Canvas>
  );
}

const Timeline = styled.div`
  display: flex;
  align-items: center;
  gap: 16px;
  padding: 0 16px;
  border-top: 2px solid ${colors.line};
`;

const Steps = styled.span`
  margin-left: auto;
  font-size: 24px;
  color: ${colors.muted};
`;

function MenuButton({ children, gap }) {
  return (
    <Button type="button" $wide $gap={gap}>
      {children}
      <Icon name="down" weight={1.3} />
    </Button>
  );
}

function BottomBar() {
  return (
    <Timeline>
      <Group>
        <IconButton icon="play" />
        <MenuButton gap={18}>Build order</MenuButton>
        <MenuButton>1×</MenuButton>
        <IconButton icon="repeat" />
      </Group>
      <Group>
        <IconButton icon="play" />
        <MenuButton>1×</MenuButton>
        <IconButton icon="repeat" />
      </Group>
      <Divider />
      <Group>
        <IconButton icon="first" />
        <IconButton icon="left" />
        <IconButton icon="right" $dim />
        <IconButton icon="last" $dim />
        <IconButton icon="rewind" />
        <IconButton icon="sliders" />
      </Group>
      <Divider />
      <Group>
        <IconButton icon="cube" />
        <IconButton icon="cube" />
        <IconButton icon="cube" />
        <IconButton icon="cube" />
        <IconButton icon="cube" $active />
      </Group>
      <Steps>5 steps</Steps>
    </Timeline>
  );
}

/* ---------- right panel ---------- */

const Panel = styled.aside`
  position: relative;
  min-height: 0;
  overflow: hidden;
  border-left: 2px solid ${colors.line};
`;

const ResizeHandle = styled.span`
  position: absolute;
  left: 12px;
  top: 884px;
  width: 6px;
  height: 64px;
  border-radius: 3px;
  background: #1e1e1d;
`;

const Tabs = styled.div`
  position: relative;
  display: flex;
  gap: 56px;
  height: 58px;
  padding-left: 40px;
  border-bottom: 2px solid ${colors.line};
  white-space: nowrap;
`;

const Tab = styled.button`
  flex: none;
  height: 58px;
  padding: 2px 0 0;
  border: 0;
  border-bottom: 4px solid ${(props) => (props.$active ? colors.accent : 'transparent')};
  border-radius: 2px;
  background: transparent;
  font-weight: ${(props) => (props.$active ? 500 : 400)};
  color: ${(props) => (props.$active ? colors.text : colors.muted)};
`;

const TabsMore = styled(Button)`
  position: absolute;
  right: 16px;
  top: -6px;
`;

const PanelSection = styled.section`
  padding: 24px;
  border-bottom: ${(props) => (props.$line ? `2px solid ${colors.line}` : '0')};
`;

const Row = styled.div`
  display: flex;
  align-items: center;
  gap: ${(props) => props.$gap || 16}px;
  > svg { flex: none; }
`;

const TreeRow = styled(Row)`
  height: 72px;
  padding: 0 16px 0 24px;
`;

const Grow = styled.div`
  flex: 1;
  min-width: 0;
  padding-left: 4px;
  font-weight: ${(props) => (props.$strong ? 500 : 400)};
`;

const Count = styled.span`
  padding-left: 12px;
  font-size: 24px;
  font-weight: 400;
  color: ${colors.muted};
`;

const Tree = styled.div`
  margin-left: 40px;
  border-left: 2px solid #4a3a34;
  padding-left: 14px;
`;

const TreeItem = styled(Row)`
  padding: 8px 16px 8px 0;
`;

const TreeActions = styled(Group)`
  margin-left: 4px;
`;

const Chevron = styled.span`
  display: flex;
  flex: none;
  width: 32px;
  margin-right: -6px;
  color: ${colors.muted};
`;

const Swatch = styled.span`
  flex: none;
  width: 24px;
  height: 24px;
  border: 2px solid #4d5a66;
  border-radius: 6px;
  background: #336699;
`;

const Chip = styled.span`
  flex: none;
  width: ${(props) => (props.$width ? `${props.$width}px` : 'auto')};
  padding: 0 16px;
  border-radius: 12px;
  background: ${colors.active};
  font-size: 24px;
  font-weight: 500;
`;

const Name = styled.span`
  flex: ${(props) => (props.$fill ? 1 : 'none')};
  white-space: nowrap;
`;

const Sub = styled.div`
  font-size: 24px;
  font-weight: 400;
  color: ${colors.muted};
`;

const Heading = styled.h2`
  flex: 1;
  margin: 0;
  font-size: 28px;
  line-height: 44px;
  font-weight: 500;
`;

const Stack = styled.div`
  display: flex;
  flex-direction: column;
  gap: ${(props) => props.$gap}px;
`;

const FieldBox = styled.label`
  display: flex;
  flex: 1;
  min-width: 0;
  flex-direction: column;
  gap: 8px;
  font-weight: 500;
  color: ${colors.muted};
`;

const FieldLine = styled.span`
  display: flex;
  align-items: center;
`;

const FieldShell = styled.span`
  ${fieldStyle}
  display: flex;
  align-items: center;
  flex: 1;
  padding: 0 16px;
  font-weight: 400;
  input {
    flex: 1;
    width: 100%;
    min-width: 0;
    padding: 0;
    border: 0;
    outline: none;
    background: transparent;
    color: ${colors.text};
  }
`;

const Thirds = styled.div`
  display: grid;
  grid-template-columns: repeat(3, 1fr);
  gap: 16px;
`;

const Lock = styled.button`
  display: flex;
  flex: none;
  padding: 0;
  border: 0;
  background: transparent;
  color: ${colors.text};
`;

const StudyRow = styled(Row)`
  padding: 8px 16px;
  border-bottom: 2px solid ${colors.line};
`;

function Field({ label, value, suffix, lock }) {
  return (
    <FieldBox>
      {label}
      <FieldLine>
        <FieldShell>
          <input defaultValue={value} />
          {suffix}
        </FieldShell>
        {lock && <Lock type="button" aria-label={`Lock ${label}`}><Icon name="lock" size={28} /></Lock>}
      </FieldLine>
    </FieldBox>
  );
}

const components = [
  { name: 'B..', chips: [['1…', 68], ['Gr…', 84]], sub: '2 objects', swatch: true, open: true },
  { name: 'Lid', chips: [], sub: '1 object', open: true },
  { name: 'Base …', chips: [['Grou…', 106]], sub: '2 objects', swatch: true, open: true },
  { name: 'Base 2', chips: [['Instance']], sub: 'Instance of Base · shows 2 objects' },
];

function ComponentItem({ item }) {
  return (
    <TreeItem $gap={12}>
      <Chevron>{item.open && <Icon name="right" weight={1.3} />}</Chevron>
      <Icon name="scanCube" />
      {item.swatch && <Swatch />}
      <Grow>
        <Row $gap={12}>
          <Name $fill={item.swatch}>{item.name}</Name>
          {item.chips.map(([text, width]) => <Chip key={text} $width={width}>{text}</Chip>)}
        </Row>
        <Sub>{item.sub}</Sub>
      </Grow>
      <TreeActions>
        {item.open && <IconButton icon="ring" />}
        <IconButton icon="eye" />
        <IconButton icon="dots" />
      </TreeActions>
    </TreeItem>
  );
}

function Inspector() {
  return (
    <Panel>
      <Tabs>
        <Tab type="button" $active>Objects</Tab>
        <Tab type="button">Layers</Tab>
        <Tab type="button">Materials</Tab>
        <Tab type="button">Comments</Tab>
        <TabsMore type="button" aria-label="More tabs"><Icon name="dots" size={28} /></TabsMore>
      </Tabs>
      <PanelSection $line>
        <Stack $gap={16}>
          <Row $gap={8}>
            <TextInput aria-label="Search objects" placeholder="Search objects" />
            <IconButton icon="plus" />
          </Row>
          <div>
            <TreeRow $gap={8}>
              <Icon name="right" weight={1.3} />
              <Icon name="origin" />
              <Grow $strong>Origin</Grow>
              <IconButton icon="eyeOff" />
            </TreeRow>
            <TreeRow $gap={8}>
              <Icon name="down" weight={1.3} />
              <Icon name="scanCube" />
              <Grow $strong>Components<Count>4</Count></Grow>
              <IconButton icon="plus" />
            </TreeRow>
            <Tree>
              {components.map((item) => <ComponentItem key={item.name} item={item} />)}
            </Tree>
          </div>
        </Stack>
      </PanelSection>
      <PanelSection>
        <Stack $gap={40}>
          <Stack $gap={16}>
            <Stack $gap={12}>
              <Heading>Joints</Heading>
              <Row $gap={10}>
                <Icon name="scanCube" />
                <Grow $strong>
                  Revolute 1
                  <Sub>Revolute · Base → Lid</Sub>
                </Grow>
                <IconButton icon="dots" />
              </Row>
            </Stack>
            <Field label="Angle" value="0" suffix="°" />
            <Row>
              <Field label="Minimum" value="0" suffix="°" />
              <Field label="Maximum" value="120" suffix="°" />
            </Row>
          </Stack>
          <Stack $gap={16}>
            <Row>
              <Heading>Motion studies</Heading>
              <Button type="button" $wide>
                <Icon name="plus" size={30} />
                New motion study
              </Button>
            </Row>
            <StudyRow $gap={10}>
              <Icon name="scanCube" />
              <Grow>
                Open the lid
                <Sub>2 keyframes · 2 s</Sub>
              </Grow>
              <IconButton icon="dots" />
            </StudyRow>
          </Stack>
          <Stack $gap={12}>
            <Row>
              <Icon name="cube" size={36} weight={1.8} />
              <TextInput aria-label="Name" defaultValue="Bracket" />
              <IconButton icon="dots" />
            </Row>
            <Sub>Box · Default</Sub>
          </Stack>
          <Stack $gap={12}>
            <Heading>Dimensions · mm</Heading>
            <Thirds>
              <Field label="Width" value="10" lock />
              <Field label="Depth" value="10" lock />
              <Field label="Height" value="20" lock />
            </Thirds>
          </Stack>
          <Stack $gap={12}>
            <Heading>Position · mm</Heading>
            <Thirds>
              <Field label="X" value="0" />
              <Field label="Y" value="0" />
              <Field label="Z" value="0" />
            </Thirds>
          </Stack>
        </Stack>
      </PanelSection>
      <ResizeHandle />
    </Panel>
  );
}

/* ---------- status bar ---------- */

const Footer = styled.footer`
  display: flex;
  align-items: center;
  gap: 16px;
  padding: 0 16px;
  border-top: 2px solid ${colors.line};
  font-size: 24px;
  color: ${colors.muted};
`;

const Hint = styled.p`
  flex: 1;
  margin: 0;
`;

const Select = styled.select`
  ${fieldStyle}
  appearance: none;
  width: 340px;
  padding: 0 16px;
  font-size: 28px;
  color: ${colors.muted};
`;

const Page = styled.div`
  display: grid;
  grid-template-rows: 98px minmax(0, 1fr) 90px;
  height: 100vh;
  overflow: hidden;
`;

export default function App() {
  return (
    <Page>
      <GlobalStyle />
      <TopBar />
      <Main>
        <Tools />
        <Center>
          <Scene />
          <BottomBar />
        </Center>
        <Inspector />
      </Main>
      <Footer>
        <Hint>
          Click to select; Shift toggles. Cmd/Ctrl reserves the pointer for navigation. Drag to window select;
          double-click takes the whole body.
        </Hint>
        <label htmlFor="length-unit">Length</label>
        <Select id="length-unit">
          <option>Millimetres</option>
        </Select>
      </Footer>
    </Page>
  );
}
